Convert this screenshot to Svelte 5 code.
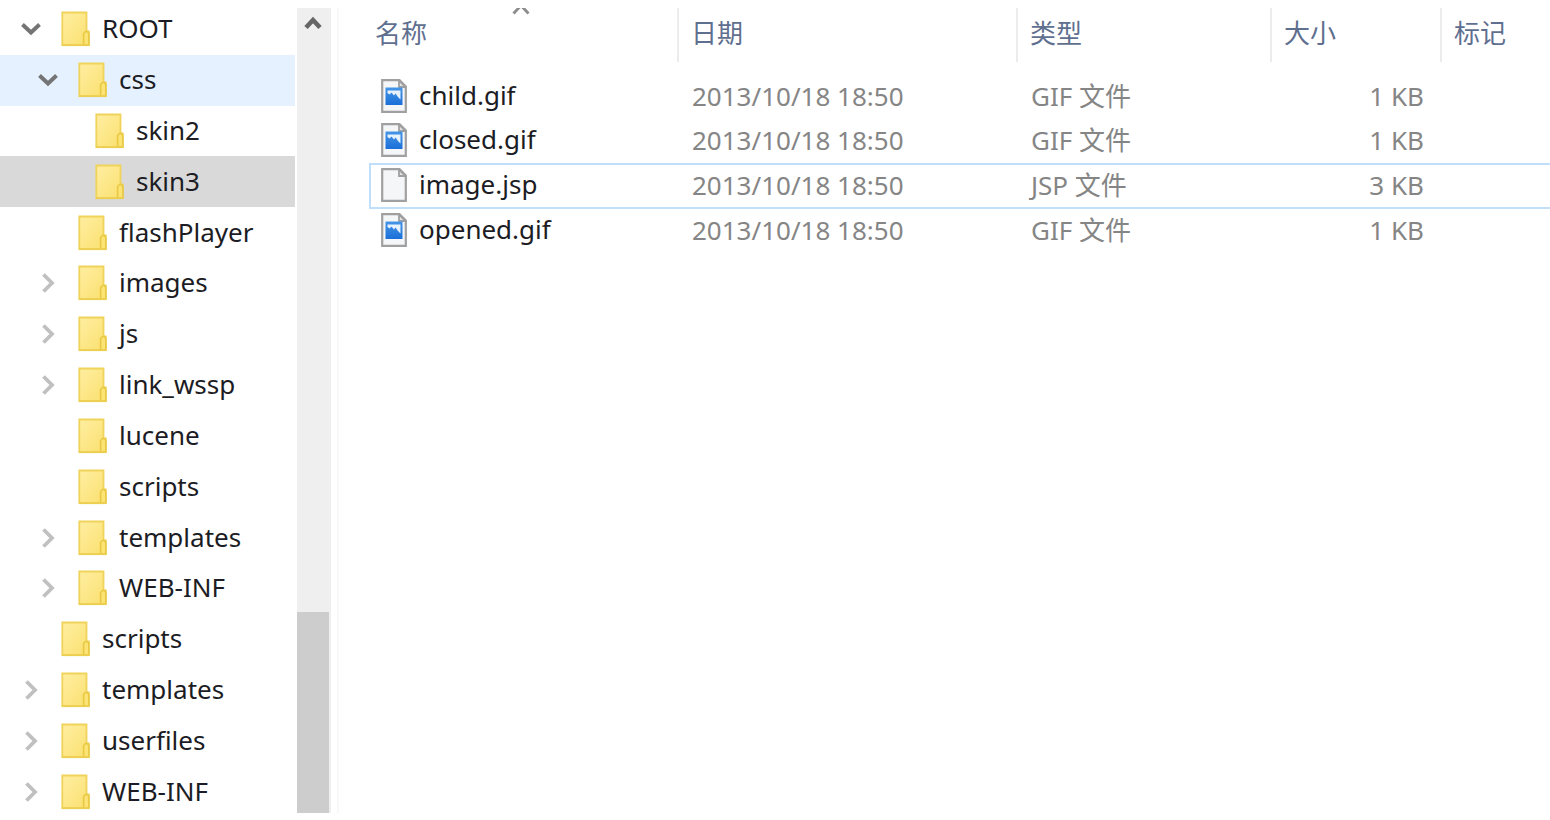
<script>
  const folders = [
    { name: 'ROOT', level: 0, state: 'open' },
    { name: 'css', level: 1, state: 'open', hover: true },
    { name: 'skin2', level: 2 },
    { name: 'skin3', level: 2, selected: true },
    { name: 'flashPlayer', level: 1 },
    { name: 'images', level: 1, state: 'closed' },
    { name: 'js', level: 1, state: 'closed' },
    { name: 'link_wssp', level: 1, state: 'closed' },
    { name: 'lucene', level: 1 },
    { name: 'scripts', level: 1 },
    { name: 'templates', level: 1, state: 'closed' },
    { name: 'WEB-INF', level: 1, state: 'closed' },
    { name: 'scripts', level: 0 },
    { name: 'templates', level: 0, state: 'closed' },
    { name: 'userfiles', level: 0, state: 'closed' },
    { name: 'WEB-INF', level: 0, state: 'closed' }
  ];

  const columns = ['名称', '日期', '类型', '大小', '标记'];

  const files = [
    { name: 'child.gif', date: '2013/10/18 18:50', type: 'GIF 文件', size: '1 KB' },
    { name: 'closed.gif', date: '2013/10/18 18:50', type: 'GIF 文件', size: '1 KB' },
    { name: 'image.jsp', date: '2013/10/18 18:50', type: 'JSP 文件', size: '3 KB' },
    { name: 'opened.gif', date: '2013/10/18 18:50', type: 'GIF 文件', size: '1 KB' }
  ];

  let focused = $state('image.jsp');
</script>

<svg class="defs" aria-hidden="true">
  <defs>
    <linearGradient id="folderFill" x1="0" y1="0" x2="1" y2="1">
      <stop offset="0" stop-color="#ffeea2" />
      <stop offset="1" stop-color="#fae06e" />
    </linearGradient>
    <linearGradient id="photoFill" x1="0" y1="0" x2="0" y2="1">
      <stop offset="0" stop-color="#4595e6" />
      <stop offset="1" stop-color="#1b6fd8" />
    </linearGradient>
  </defs>
</svg>

<div class="explorer">
  <nav class="tree">
    <ul>
      {#each folders as folder}
        <li class:hover={folder.hover} class:selected={folder.selected} style:--level={folder.level}>
          {#if folder.state}
            <button class="toggle" aria-label={folder.name} aria-expanded={folder.state === 'open'}>
              <svg width="24" height="24" viewBox="0 0 24 24" fill="none">
                {#if folder.state === 'open'}
                  <path d="M3.5 7.5 12 15.5 20.5 7.5" stroke="#747474" stroke-width="4" />
                {:else}
                  <path d="M7.5 3.5 16 12 7.5 20.5" stroke="#c0c0c0" stroke-width="3.8" />
                {/if}
              </svg>
            </button>
          {:else}
            <span class="toggle"></span>
          {/if}
          <button class="folder">
            <svg width="30" height="36" viewBox="0 0 30 36" aria-hidden="true">
              <path d="M1.3 1.5H25.5V20.5H27.8V34.2H1.3Z" fill="url(#folderFill)" stroke="#efd35b" stroke-width="1.8" />
              <path d="M22.6 34V22.5L24.4 20.5H26.6L27.8 22.5V34Z" fill="#fbe375" stroke="#e9c943" stroke-width="1.6" />
              <path d="M1 34.2H28.200" stroke="#ecce50" stroke-width="1.8" />
            </svg>
            <span>{folder.name}</span>
          </button>
        </li>
      {/each}
    </ul>
  </nav>

  <div class="scrollbar">
    <button class="up" aria-label="▲">
      <svg width="20" height="18" viewBox="0 0 20 18" fill="none">
        <path d="M3 13.5 10 6 17 13.5" stroke="#666" stroke-width="4.6" />
      </svg>
    </button>
    <div class="thumb"></div>
  </div>

  <main>
    <table>
      <colgroup>
        <col class="c-name" /><col class="c-date" /><col class="c-type" /><col class="c-size" /><col />
      </colgroup>
      <thead>
        <tr>
          {#each columns as column, i}
            <th>
              <button>{column}</button>
              {#if i === 0}
                <svg class="sort" width="20" height="8" viewBox="0 0 20 8" fill="none" aria-hidden="true">
                  <path d="M2.5 5.500 10-2.500 17.500 5.500" stroke="#8c8c8c" stroke-width="2.8" />
                </svg>
              {/if}
            </th>
          {/each}
        </tr>
      </thead>
      <tbody>
        {#each files as file}
          <tr class:focused={focused === file.name} onclick={() => (focused = file.name)}>
            <td class="name">
              <span class="entry">
                <svg width="26" height="34" viewBox="0 0 26 34" aria-hidden="true">
                  <path d="M1.2 1.2H18.5L24.8 7.5V32.8H1.2Z" fill="#f5f6f7" stroke="#a0a0a0" stroke-width="2.2" />
                  <path d="M18 1.5V8H24.5Z" fill="#e4e4e4" stroke="#a0a0a0" stroke-width="1.8" />
                  {#if file.name.endsWith('.gif')}
                    <path d="M4.5 8.500H21.5V26H4.5Z" fill="url(#photoFill)" />
                    <path d="M6.5 11.500H19.500V20.500L17 18 14.500 14.500 13 16.500 10.500 13.500 8.500 15.500 6.500 14Z" fill="#e6f2fd" />
                  {/if}
                </svg>
                <span>{file.name}</span>
              </span>
            </td>
            <td>{file.date}</td>
            <td>{file.type}</td>
            <td class="size">{file.size}</td>
            <td></td>
          </tr>
        {/each}
      </tbody>
    </table>
  </main>
</div>

<style>
  :global(body) {
    margin: 0;
    background: #fff;
  }
  .defs {
    position: absolute;
    width: 0;
    height: 0;
  }
  .explorer {
    display: flex;
    box-sizing: border-box;
    min-height: 100vh;
    padding: 8px 0 7px;
    overflow: hidden;
    font-family: 'Noto Sans', 'Noto Sans CJK SC', sans-serif;
    font-size: 26px;
    line-height: 36px;
    color: #1c1c24;
  }
  button {
    padding: 0;
    border: 0;
    background: none;
    font: inherit;
    color: inherit;
    text-align: left;
  }
  .tree {
    display: flex;
    flex: 0 0 295px;
    margin: -4px 0;
  }
  ul {
    display: flex;
    flex-direction: column;
    flex: 1;
    margin: 0;
    padding: 0;
    list-style: none;
  }
  li {
    display: flex;
    flex: 1;
    align-items: center;
    gap: 18px;
    padding-left: calc(19px + var(--level) * 17px);
  }
  li.hover {
    background: #e5f1fe;
  }
  li.selected {
    background: #d9d9d9;
  }
  .toggle {
    width: 24px;
    height: 24px;
  }
  .toggle svg,
  .folder svg {
    display: block;
  }
  .folder {
    display: flex;
    align-items: center;
    gap: 11px;
  }
  .folder span,
  .entry span {
    padding-bottom: 2px;
  }
  .scrollbar {
    display: flex;
    flex-direction: column;
    flex: 0 0 34px;
    margin-left: 2px;
    background: #efefef;
    border-right: 6px solid #fff;
    box-shadow: 2px 0 #f8f8f8;
  }
  .up {
    display: flex;
    padding: 6px 0 0 6px;
  }
  .thumb {
    height: 25%;
    margin: auto 2px 0 0;
    background: #cdcdcd;
  }
  main {
    flex: 1;
    min-width: 0;
    padding-left: 32px;
  }
  table {
    width: 100%;
    table-layout: fixed;
    border-spacing: 0;
  }
  .c-name {
    width: 308px;
  }
  .c-date {
    width: 339px;
  }
  .c-type {
    width: 254px;
  }
  .c-size {
    width: 170px;
  }
  th {
    position: relative;
    height: 54px;
    padding: 0 0 4px 12px;
    box-sizing: border-box;
    border-left: 2px solid #ececec;
    font-weight: 400;
    text-align: left;
    color: #5f6f8f;
  }
  th:first-child {
    padding-left: 6px;
    border-left: 0;
  }
  .sort {
    position: absolute;
    top: 0;
    left: 142px;
  }
  thead::after {
    content: '';
    display: block;
    height: 13px;
  }
  td {
    box-sizing: border-box;
    height: 44px;
    padding: 0 0 2px 15px;
    white-space: nowrap;
    color: #858585;
  }
  td.name {
    padding-left: 12px;
    color: #1c1c24;
  }
  td.size {
    padding-right: 16px;
    text-align: right;
  }
  .focused td {
    height: 46px;
    border: solid #bfdffa;
    border-width: 2px 0;
  }
  .focused td.name {
    padding-left: 10px;
    border-left-width: 2px;
  }
  .entry {
    display: flex;
    align-items: center;
    gap: 12px;
  }
</style>
